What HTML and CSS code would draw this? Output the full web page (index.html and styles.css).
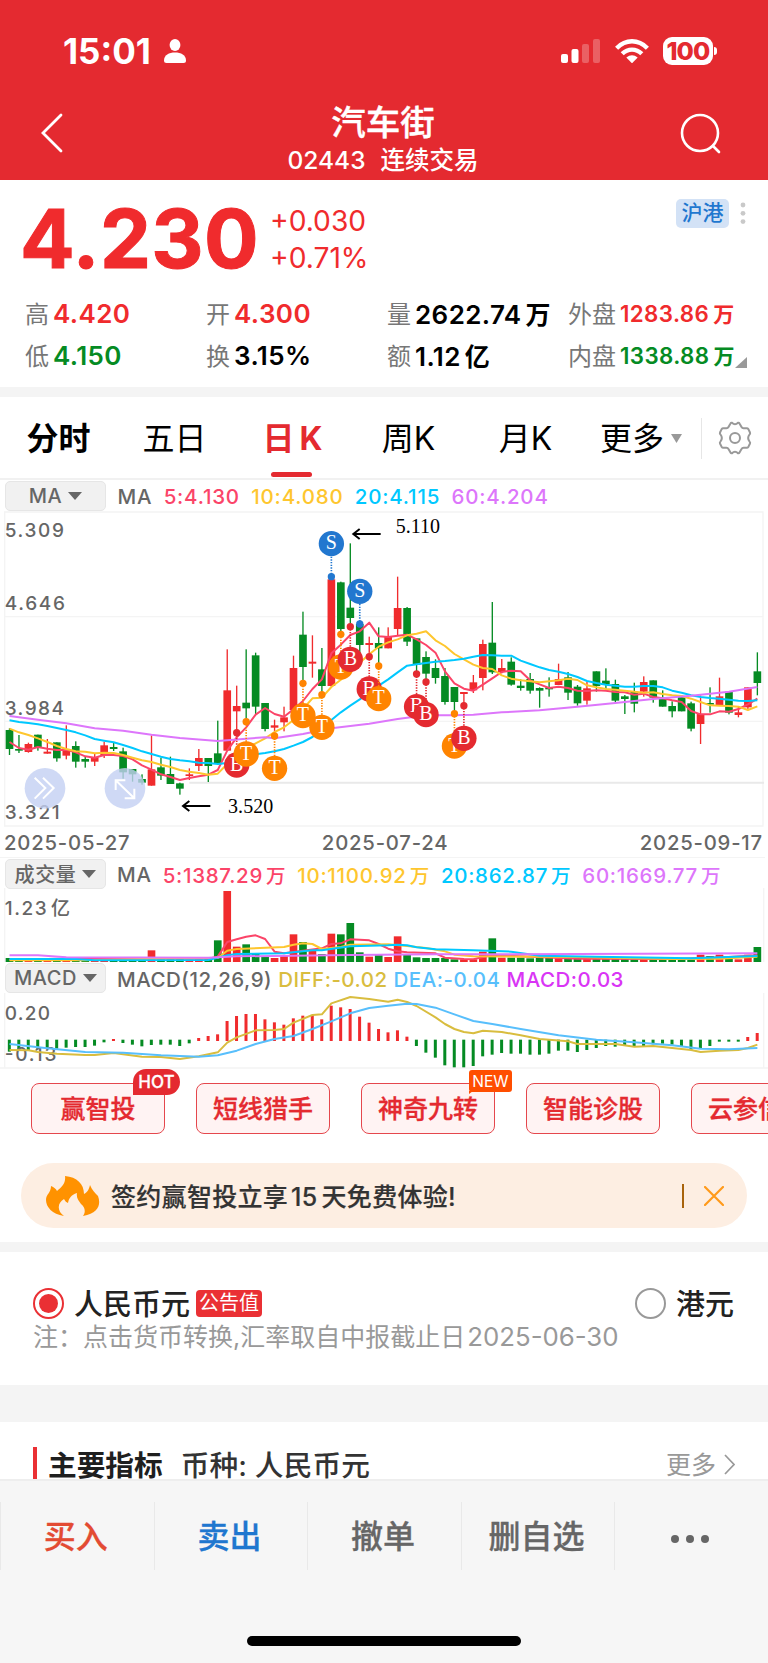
FILE: index.html
```html
<!DOCTYPE html>
<html lang="zh-CN">
<head>
    <meta charset="UTF-8">
    <meta name="viewport" content="width=device-width, initial-scale=1.0">
    <title>汽车街 02443</title>
    <link rel="stylesheet" href="styles.css">
</head>
<body>
    <header class="header">
        <div class="status">
            <span class="time">15:01</span>
            <svg class="person" width="22" height="24" viewBox="0 0 22 24"><ellipse cx="11" cy="6" rx="5.4" ry="6"/><path d="M0 21.5C0 16 5 13.500 11 13.500S22 16 22 21.500Q22 24 19.500 24H2.500Q0 24 0 21.500Z"/></svg>
            <svg class="signal" width="39" height="24" viewBox="0 0 39 24"><rect y="15" width="7" height="9" rx="2"/><rect x="10.500" y="10" width="7" height="14" rx="2"/><g opacity=".25"><rect x="21" y="5" width="7" height="19" rx="2"/><rect x="32" width="7" height="24" rx="2"/></g></svg>
            <svg class="wifi" width="34" height="24" viewBox="0 0 34 24"><g fill="none" stroke="#fff" stroke-width="4.400"><path d="M1.600 9.200Q8.500 2.300 17 2.300T32.400 9.200"/><path d="M7.200 14.800Q11.500 10.600 17 10.600T26.800 14.800"/></g><path d="M11.300 18.600Q17 13.800 22.700 18.600L17 24.300Z"/></svg>
            <span class="battery">100</span>
        </div>
        <div class="nav">
            <svg width="22" height="40" viewBox="0 0 22 40"><path d="M20 2L2 20L20 38" fill="none" stroke="#fff" stroke-width="2.800" stroke-linecap="round"/></svg>
            <div class="title">
                <h1>汽车街</h1>
                <p><span>02443</span><span>连续交易</span></p>
            </div>
            <svg width="42" height="42" viewBox="0 0 42 42"><g fill="none" stroke="#fff" stroke-width="2.600" stroke-linecap="round"><circle cx="20" cy="20" r="18"/><path d="M33 33L39 39"/></g></svg>
        </div>
    </header>

    <section class="quote">
        <div class="price-row">
            <span class="price">4.230</span>
            <div class="change"><span>+0.030</span><span>+0.71%</span></div>
            <span class="market">沪港</span>
            <svg class="dots" width="6" height="30" viewBox="0 0 6 30"><circle cx="3" cy="5" r="2.400"/><circle cx="3" cy="13.300" r="2.400"/><circle cx="3" cy="21.600" r="2.400"/></svg>
        </div>
        <div class="stats">
            <div><label>高</label><b class="up">4.420</b></div>
            <div><label>开</label><b class="up">4.300</b></div>
            <div><label>量</label><b>2622.74<i>万</i></b></div>
            <div class="small"><label>外盘</label><b class="up">1283.86<i>万</i></b></div>
            <div><label>低</label><b class="down">4.150</b></div>
            <div><label>换</label><b>3.15%</b></div>
            <div><label>额</label><b>1.12<i>亿</i></b></div>
            <div class="small"><label>内盘</label><b class="down">1338.88<i>万</i></b><svg class="corner" width="12" height="11" viewBox="0 0 12 11"><path d="M12 0V11H0Z" fill="#999"/></svg></div>
        </div>
    </section>

    <nav class="tabs">
        <a class="bold">分时</a>
        <a>五日</a>
        <a class="active">日<span>K</span></a>
        <a>周K</a>
        <a>月K</a>
        <a class="more">更多<svg width="11" height="9" viewBox="0 0 11 9"><path d="M0 0H11L5.500 9Z" fill="#999"/></svg></a>
        <svg class="gear" width="34" height="34" viewBox="0 0 34 34"><g fill="none" stroke="#999" stroke-width="2" stroke-linejoin="round"><path d="M12.500 2.500Q13 1.500 14 1.800Q17 4.800 20 1.800Q21 1.500 21.500 2.500L23.500 6Q24.200 7.300 25.500 7.300H29Q30 7.500 30.600 8.600L32 11.500Q32.500 12.800 31.500 13.500Q28.800 17 31.500 20.500Q32.500 21.300 32 22.500L30.600 25.400Q30 26.500 29 26.700H25.500Q24.200 26.700 23.500 28L21.500 31.500Q21 32.500 20 32.200Q17 29.200 14 32.200Q13 32.500 12.500 31.500L10.500 28Q9.800 26.700 8.500 26.700H5Q4 26.500 3.400 25.400L2 22.500Q1.500 21.300 2.500 20.500Q5.200 17 2.500 13.500Q1.500 12.800 2 11.500L3.400 8.600Q4 7.500 5 7.300H8.500Q9.800 7.300 10.500 6Z"/><circle cx="17" cy="17" r="5"/></g></svg>
    </nav>

    <section class="charts">
        <div class="legend legend-ma">
            <span class="chip">MA<i></i></span>
            <span>MA</span>
            <span class="ma5">5:4.130</span>
            <span class="ma10">10:4.080</span>
            <span class="ma20">20:4.115</span>
            <span class="ma60">60:4.204</span>
        </div>
        <svg id="kline" width="768" height="318" viewBox="0 0 2304 954"></svg>
        <div class="dates"><span>2025-05-27</span><span>2025-07-24</span><span>2025-09-17</span></div>
        <div class="legend legend-vol">
            <span class="chip">成交量<i></i></span>
            <span>MA</span>
            <span class="ma5">5:1387.29<em>万</em></span>
            <span class="ma10">10:1100.92<em>万</em></span>
            <span class="ma20">20:862.87<em>万</em></span>
            <span class="ma60">60:1669.77<em>万</em></span>
        </div>
        <svg id="volume" width="768" height="74" viewBox="0 204 2304 222"></svg>
        <div class="legend legend-macd">
            <span class="chip">MACD<i></i></span>
            <span>MACD(12,26,9)</span>
            <span class="diff">DIFF:-0.02</span>
            <span class="dea">DEA:-0.04</span>
            <span class="macd">MACD:0.03</span>
        </div>
        <svg id="macd" width="768" height="76" viewBox="0 519 2304 228"></svg>
    </section>

    <div class="tools">
        <a>赢智投<span class="tag hot">HOT</span></a>
        <a>短线猎手</a>
        <a>神奇九转<span class="tag new">NEW</span></a>
        <a>智能诊股</a>
        <a>云参信息</a>
    </div>

    <div class="banner">
        <svg width="54" height="40" viewBox="0 0 54 40"><path fill="#ff9200" d="M18 40C6 38 0 31 0 24C0 18 5 17 5 10C8 11 10 13 11 15C16 11 20 7 19 0C31 1 38 8 38 18C42 16 43 13 44 9C46 14 49 17 52 20C55 28 53 37 37 40C40 36 39 31 35 28C33 25 30 22 31 17C25 19 23 22 22 27C20 26 19 25 18 23C11 27 11 35 18 40Z"/></svg>
        <span class="banner-text">签约赢智投立享<b>15</b>天免费体验!</span>
        <span class="bar"></span>
        <svg width="20" height="20" viewBox="0 0 20 20"><path d="M1 1L19 19M19 1L1 19" stroke="#ff9a1a" stroke-width="2.200" stroke-linecap="round"/></svg>
    </div>

    <section class="currency">
        <div class="options">
            <span class="radio checked"></span>
            <span class="name">人民币元</span>
            <span class="notice">公告值</span>
            <span class="radio hk"></span>
            <span class="name">港元</span>
        </div>
        <p>注：点击货币转换,汇率取自中报截止日<span>2025-06-30</span></p>
    </section>

    <section class="metrics">
        <h2>主要指标</h2>
        <h3>币种: 人民币元</h3>
        <a>更多<svg width="11" height="21" viewBox="0 0 11 21"><path d="M1 1L10 10.500L1 20" fill="none" stroke="#999" stroke-width="1.700"/></svg></a>
    </section>

    <footer class="trade">
        <div class="actions">
            <a class="buy">买入</a>
            <a class="sell">卖出</a>
            <a>撤单</a>
            <a>删自选</a>
            <a><svg width="40" height="10" viewBox="0 0 40 10"><circle cx="5" cy="5" r="4"/><circle cx="20" cy="5" r="4"/><circle cx="35" cy="5" r="4"/></svg></a>
        </div>
        <div class="home"></div>
    </footer>
    <script src="script.js"></script>
</body>
</html>
```
FILE: styles.css
```css
* {
    box-sizing: border-box;
}

body {
    margin: 0;
    width: 768px;
    height: 1663px;
    overflow: hidden;
    background-color: #fff;
    color: #000;
    font-family: Inter, "Noto Sans CJK SC", sans-serif;
}

h1, h2, h3, p {
    margin: 0;
    font-weight: 500;
}

i, em {
    font-style: normal;
}

svg {
    display: block;
    flex: none;
}

/* header */
.header {
    height: 180px;
    background-color: #e42a30;
    color: #fff;
}

.status {
    display: flex;
    align-items: center;
    height: 102px;
    padding: 0 52px 0 63px;
    fill: #fff;
}

.time {
    width: 101px;
    font-size: 35px;
    font-weight: 700;
}

.signal {
    margin-left: auto;
}

.wifi {
    margin: 0 14px 0 15px;
}

.battery {
    position: relative;
    width: 50px;
    height: 28px;
    margin-right: 3px;
    border-radius: 9px;
    background-color: #fff;
    color: #e42a30;
    font-size: 25px;
    font-weight: 800;
    letter-spacing: -0.8px;
    line-height: 28px;
    text-align: center;
}

.battery::after {
    content: "";
    position: absolute;
    right: -4px;
    top: 10px;
    width: 3px;
    height: 8px;
    border-radius: 0 3px 3px 0;
    background-color: #fff;
}

.nav {
    display: flex;
    justify-content: space-between;
    align-items: flex-start;
    padding: 11px 46px 0 41px;
}

.title {
    margin-top: -10px;
    margin-left: 23px;
    text-align: center;
}

.title h1 {
    font-size: 34.5px;
    line-height: 39px;
    -webkit-text-stroke: 0.4px;
}

.title p {
    display: flex;
    gap: 15px;
    font-size: 24.5px;
    line-height: 36px;
}

/* price */
.quote {
    height: 217px;
    border-bottom: 10px solid #f4f4f4;
}

.price-row {
    display: flex;
    height: 112px;
    padding: 0 22px 0 20px;
    color: #f02b2d;
}

.price {
    width: 250px;
    font-size: 81px;
    font-weight: 700;
    letter-spacing: 0.4px;
    line-height: 118px;
    -webkit-text-stroke: 1px;
}

.change {
    display: flex;
    flex-direction: column;
    padding-top: 23px;
    font-size: 28.2px;
    line-height: 37px;
}

.market {
    height: 29px;
    width: 53px;
    margin: 19px 11px 0 auto;
    border-radius: 5px;
    background-color: #d3e2f6;
    color: #1f77cf;
    font-size: 21px;
    font-weight: 500;
    line-height: 28px;
    text-align: center;
}

.dots {
    margin-top: 20px;
    fill: #c9c9c9;
}

.stats {
    display: grid;
    grid-template-columns: repeat(4, 181px);
    grid-auto-rows: 42px;
    padding-left: 25px;
    font-size: 26px;
}

.stats div {
    display: flex;
    align-items: center;
    white-space: nowrap;
}

.stats label {
    margin: -2px 4px 0 0;
    color: #777;
    font-size: 24px;
}

.stats b {
    font-weight: 600;
    letter-spacing: 0.4px;
}

.stats i {
    margin-left: 4px;
    font-size: 25px;
}

.stats .small b {
    font-size: 22.3px;
}

.stats .small i {
    font-size: 21px;
}

.up {
    color: #f02b2d;
}

.down {
    color: #058b23;
}

.stats .corner {
    margin-top: 14px;
}

/* tabs */
.tabs {
    display: flex;
    align-items: center;
    height: 83px;
    border-bottom: 2px solid #f1f1f1;
    font-size: 32px;
}

.tabs a {
    position: relative;
    display: flex;
    justify-content: center;
    align-items: center;
    width: 117px;
    padding: 2px 2px 0 0;
    line-height: 79px;
}

.tabs .bold {
    padding-right: 0;
    font-weight: 600;
}

.tabs .active {
    padding-right: 0;
    color: #e42a30;
    font-weight: 600;
}

.tabs .active span {
    margin-left: 5px;
    font-weight: 700;
}

.tabs .active::after {
    content: "";
    position: absolute;
    left: 37px;
    bottom: 1px;
    width: 41px;
    height: 5px;
    border-radius: 3px;
    background-color: #e42a30;
}

.tabs .more {
    padding-right: 5px;
}

.tabs .more svg {
    margin-left: 7px;
}

.tabs .more::after {
    content: "";
    position: absolute;
    right: 0;
    top: 21px;
    height: 41px;
    border-right: 1px solid #e6e6e6;
}

.gear {
    margin-left: 16px;
}

/* charts */
.legend {
    display: flex;
    align-items: center;
    padding-left: 5px;
    color: #666;
    font-size: 20.5px;
    font-weight: 500;
    letter-spacing: 0.8px;
    white-space: nowrap;
}

.legend > span + span {
    padding-top: 3px;
}

.legend-ma {
    height: 30px;
    gap: 11.4px;
}

.legend-vol {
    height: 31px;
    gap: 11px;
    margin-right: 3px;
    border-top: 1px solid #f4f4f4;
    letter-spacing: 0.7px;
}

.legend-macd {
    height: 31px;
    gap: 6px;
    letter-spacing: 0.5px;
}

.legend em {
    margin-left: 3px;
    font-size: 19.5px;
}

.legend .chip {
    display: flex;
    align-items: center;
    justify-content: center;
    width: 101px;
    height: 30px;
    margin-top: 1px;
    border: 1px solid #e6e6e6;
    border-radius: 5px;
    background-color: #f1f1f1;
    font-size: 20px;
    letter-spacing: 0.6px;
}

.legend-macd .chip {
    margin-right: 5px;
}

.chip i {
    margin-left: 6px;
    border: 7px solid transparent;
    border-top: 8px solid #666;
    border-bottom: 0;
}

.ma5 { color: #fb4468; }
.ma10 { color: #fec62e; }
.ma20 { color: #00c8ff; }
.ma60 { color: #dd76fb; }
.diff { color: #d9bd3f; }
.dea { color: #58bffc; }
.macd { color: #d935f5; }

.dates {
    display: flex;
    justify-content: space-between;
    height: 29px;
    padding: 0 5px 0 4px;
    color: #666;
    font-size: 20.3px;
    font-weight: 500;
    letter-spacing: 0.8px;
    line-height: 30px;
}

.axis {
    fill: #666;
    font-size: 57px;
    font-weight: 500;
}

.serif {
    font-family: "Liberation Serif", serif;
}

/* tool buttons */
.tools {
    display: flex;
    gap: 31px;
    height: 95px;
    padding: 14px 0 0 31px;
    overflow: hidden;
}

.tools a {
    position: relative;
    flex: none;
    width: 134px;
    height: 51px;
    border: 1px solid #e5474d;
    border-radius: 8px;
    background-color: #fff3f3;
    color: #e42a30;
    font-size: 25px;
    font-weight: 500;
    line-height: 50px;
    text-align: center;
    -webkit-text-stroke: 0.3px;
}

.tag {
    position: absolute;
    color: #fff;
    font-size: 17px;
}

.hot {
    left: 101px;
    top: -15px;
    width: 47px;
    height: 26px;
    border-radius: 13px 13px 13px 0;
    background-color: #e42a30;
    line-height: 27px;
}

.new {
    left: 107px;
    top: -14px;
    width: 43px;
    height: 22px;
    border-radius: 3px;
    background-color: #ff4e00;
    font-size: 15.5px;
    font-weight: 400;
    line-height: 23px;
    -webkit-text-stroke: 0;
}

.new::after {
    content: "";
    position: absolute;
    left: 0;
    bottom: -2px;
    border-top: 3px solid #ff4e00;
    border-right: 4px solid transparent;
}

.banner {
    display: flex;
    align-items: center;
    height: 65px;
    margin: -1px 21px 14px;
    padding: 0 23px 0 25px;
    border-radius: 33px;
    background-color: #fdeee2;
    color: #333;
}

.banner-text {
    margin: -2px 0 0 11px;
    font-size: 25px;
    font-weight: 500;
    letter-spacing: 0.3px;
    -webkit-text-stroke: 0.2px;
}

.banner-text b {
    margin: 0 4px 0 3px;
    font-weight: 500;
    font-size: 25px;
}

.bar {
    width: 2px;
    height: 24px;
    margin: 0 20px 0 auto;
    background-color: #a8630c;
}

/* currency */
.currency {
    height: 180px;
    padding: 32px 34px 0 33px;
    border-top: 10px solid #f4f4f4;
    border-bottom: 37px solid #f4f4f4;
}

.options {
    display: flex;
    align-items: center;
    height: 39px;
    color: #222;
    font-size: 29px;
    font-weight: 500;
}

.name {
    margin-top: -3px;
}

.radio {
    width: 31px;
    height: 31px;
    margin-right: 10px;
    border: 2px solid #999;
    border-radius: 50%;
}

.checked {
    padding: 4px;
    border-color: #ea3034;
    background-color: #ea3034;
    background-clip: content-box;
}

.hk {
    margin-left: auto;
}

.notice {
    width: 66px;
    height: 27px;
    margin-left: 6px;
    border-radius: 4px;
    background-color: #ea3034;
    color: #fff;
    font-size: 20px;
    font-weight: 400;
    line-height: 26px;
    text-align: center;
}

.currency p {
    color: #999;
    font-size: 25px;
    font-weight: 400;
    line-height: 28px;
    white-space: nowrap;
}

.currency p span {
    margin-left: 2px;
    font-size: 25.8px;
}

.metrics {
    display: flex;
    align-items: center;
    height: 57px;
    padding: 25px 33px 0;
}

.metrics h2,
.metrics h3 {
    color: #1f1f1f;
    font-size: 28.7px;
    line-height: 37px;
}

.metrics h2 {
    height: 32px;
    padding-left: 11px;
    border-left: 4px solid #ea3034;
    font-weight: 700;
}

.metrics h3 {
    margin: 5px 0 0 18px;
    color: #333;
    letter-spacing: 0.1px;
}

.metrics a {
    display: flex;
    align-items: center;
    gap: 8px;
    margin-top: 3px;
    margin-left: auto;
    color: #999;
    font-size: 25px;
    line-height: 32px;
}

/* bottom bar */
.trade {
    position: relative;
    height: 184px;
    padding-top: 21px;
    border-top: 2px solid #eee;
    background-color: #f6f6f6;
}

.actions {
    display: flex;
}

.actions a {
    display: flex;
    align-items: center;
    justify-content: center;
    width: 20%;
    height: 68px;
    padding: 0 3px 5px 0;
    border-left: 1px solid #e9e9e9;
    color: #666;
    fill: #666;
    font-size: 32px;
    font-weight: 500;
    -webkit-text-stroke: 0.3px;
}

.actions a:last-child {
    padding: 5px 3px 0 0;
}

.actions .buy {
    color: #e34b33;
}

.actions .sell {
    color: #1f77cf;
}

.home {
    width: 274px;
    height: 10px;
    margin: 66px auto 0;
    border-radius: 5px;
    background-color: #000;
}
```
FILE: script.js
```js
// All chart coordinates are in @3x units, the svg viewBox scales them down
const STEP = 28.4;
const RED = '#f02b2d';
const GREEN = '#058b23';
const cx = i => 28.5 + STEP * i;

// [color, body top, body bottom, high, low]
const candles = [
    ['G', 660, 717, 655, 735], ['G', 717, 722, 675, 729], ['R', 702, 726, 698, 728], ['G', 674, 712, 674, 722],
    ['R', 725, 731, 687, 731], ['G', 697, 745, 697, 755], ['R', 718, 737, 646, 748], ['G', 708, 755, 694, 773],
    ['G', 747, 755, 740, 773], ['R', 742, 755, 731, 768], ['R', 706, 737, 695, 744], ['G', 711, 717, 698, 723],
    ['G', 724, 787, 713, 806], ['G', 777, 793, 777, 815], ['G', 807, 818, 793, 824], ['R', 778, 827, 676, 827],
    ['G', 772, 797, 743, 810], ['G', 792, 822, 740, 822], ['G', 820, 836, 818, 854], ['R', 793, 798, 775, 810],
    ['R', 744, 768, 717, 783], ['G', 744, 768, 744, 816], ['G', 730, 762, 632, 765], ['R', 541, 722, 418, 722],
    ['R', 588, 604, 527, 665], ['G', 578, 595, 418, 632], ['G', 436, 590, 428, 612], ['G', 579, 657, 579, 664],
    ['R', 646, 653, 629, 676], ['R', 622, 637, 590, 664], ['R', 474, 600, 437, 600], ['G', 374, 471, 305, 520],
    ['R', 455, 461, 376, 503], ['G', 478, 528, 414, 552], ['R', 208, 528, 200, 530], ['G', 217, 357, 215, 370],
    ['G', 293, 324, 100, 348], ['G', 342, 405, 342, 470], ['R', 399, 405, 380, 438], ['G', 399, 415, 352, 466],
    ['R', 381, 415, 352, 415], ['R', 294, 357, 200, 375], ['G', 294, 395, 291, 408], ['G', 385, 465, 385, 490],
    ['G', 441, 491, 424, 515], ['G', 474, 504, 448, 521], ['G', 498, 576, 474, 584], ['G', 531, 576, 531, 608],
    ['R', 546, 552, 546, 585], ['R', 517, 541, 495, 549], ['R', 402, 504, 389, 541], ['G', 398, 487, 276, 492],
    ['R', 474, 486, 447, 490], ['G', 455, 524, 442, 527], ['G', 527, 534, 508, 542], ['G', 507, 542, 489, 551],
    ['G', 534, 542, 532, 593], ['G', 532, 538, 502, 560], ['R', 507, 525, 461, 525], ['G', 502, 548, 486, 570],
    ['G', 530, 580, 525, 587], ['R', 535, 572, 516, 584], ['G', 484, 528, 484, 545], ['G', 512, 522, 475, 540],
    ['G', 522, 572, 509, 577], ['G', 559, 567, 555, 612], ['G', 545, 581, 518, 607], ['R', 516, 545, 499, 560],
    ['G', 511, 563, 511, 578], ['G', 566, 590, 541, 590], ['G', 588, 604, 574, 622], ['G', 560, 604, 555, 604],
    ['G', 580, 656, 575, 664], ['R', 612, 642, 556, 702], ['G', 579, 584, 532, 608], ['R', 559, 585, 503, 585],
    ['G', 545, 608, 545, 613], ['R', 607, 615, 591, 622], ['R', 532, 592, 532, 601], ['G', 484, 519, 427, 556]
];

const ma5 = [696, 714, 719, 711, 716, 720, 719, 727, 739, 743, 735, 735, 738, 748, 766, 779, 793, 801, 810, 804,
    799, 794, 780, 722, 682, 652, 614, 594, 612, 620, 598, 573, 537, 508, 430, 404, 375, 364, 338, 379,
    381, 377, 374, 388, 405, 428, 484, 520, 536, 542, 524, 505, 486, 482, 484, 511, 523, 534, 530, 534,
    542, 543, 541, 542, 546, 547, 554, 551, 561, 565, 571, 576, 603, 613, 613, 604, 605, 597, 583, 566];
const ma10 = [656, 667, 675, 685, 696, 708, 717, 724, 725, 730, 728, 729, 735, 743, 751, 756, 764, 771, 780, 785,
    789, 794, 791, 762, 738, 719, 700, 685, 666, 652, 630, 597, 565, 563, 531, 509, 485, 458, 433, 410,
    397, 388, 376, 371, 364, 391, 408, 432, 448, 464, 474, 477, 496, 506, 511, 514, 517, 514, 511, 506,
    510, 526, 532, 537, 539, 542, 545, 548, 547, 552, 556, 558, 566, 576, 586, 587, 588, 590, 600, 589];
const ma20 = [631, 636, 639, 643, 648, 654, 660, 667, 676, 687, 692, 697, 705, 714, 724, 732, 740, 747, 751, 754,
    758, 759, 762, 759, 750, 740, 733, 729, 724, 717, 707, 696, 681, 661, 630, 607, 587, 568, 547, 527,
    508, 487, 467, 463, 459, 455, 453, 450, 446, 440, 435, 436, 437, 437, 452, 462, 472, 480, 485, 492,
    501, 513, 519, 524, 527, 530, 530, 528, 528, 532, 542, 548, 556, 561, 564, 566, 569, 572, 573, 571];

// [index, y] pairs, the slow lines need fewer points
const ma60 = [[0, 618], [3, 629], [6, 640], [9, 655], [12, 662], [15, 674], [18, 684], [22, 693], [25, 686], [27, 682],
    [28, 685], [31, 672], [34, 655], [38, 641], [41, 627], [44, 616], [47, 616], [49, 614], [52, 607], [56, 601],
    [60, 590], [64, 579], [68, 567], [72, 557], [76, 545], [79, 531]];

const volumes = [414, 417, 418, 419, 417, 418, 417, 417, 415, 416, 416, 416, 415, 415, 415, 391, 417, 416, 416, 419,
    418, 417, 361, 213, 380, 373, 402, 411, 414, 408, 343, 366, 392, 402, 341, 343, 309, 397, 410, 404,
    411, 349, 404, 412, 414, 414, 414, 418, 418, 418, 395, 355, 413, 413, 413, 415, 412, 414, 415, 414,
    414, 417, 417, 416, 417, 417, 418, 418, 418, 418, 418, 418, 418, 404, 408, 404, 415, 418, 404, 381];
const vol5 = [[0, 419], [8, 415], [21, 416], [22, 410], [23, 366], [24, 358], [25, 350], [26, 346], [27, 357], [28, 395],
    [29, 400], [31, 392], [33, 385], [34, 372], [35, 370], [36, 358], [38, 361], [39, 372], [40, 386], [41, 394],
    [42, 397], [45, 400], [46, 413], [48, 417], [49, 418], [51, 405], [55, 410], [60, 416], [70, 417], [76, 411], [79, 406]];
const vol10 = [[0, 421], [8, 421], [15, 416], [22, 414], [23, 392], [24, 387], [29, 381], [30, 374], [31, 370], [32, 372],
    [33, 387], [35, 381], [36, 374], [40, 373], [42, 378], [44, 384], [46, 394], [47, 404], [49, 409], [60, 411],
    [70, 417], [75, 416], [79, 410]];
const vol20 = [[0, 417], [7, 417], [9, 421], [21, 420], [23, 406], [24, 402], [29, 400], [32, 391], [33, 391], [36, 379],
    [40, 376], [41, 374], [42, 376], [43, 382], [45, 388], [49, 391], [53, 395], [56, 407], [62, 410], [72, 415], [79, 408]];
const vol60 = [[0, 406], [3, 406], [6, 412], [21, 413], [24, 409], [36, 405], [45, 403], [60, 402], [79, 400]];

const bars = [695, 693, 690, 686, 684, 686, 683, 681, 681, 677, 667, -657, 669, 674, 679, 675, 674, 674, 678, 670,
    -654, -648, -643, -603, -588, -582, -582, -598, -607, -614, -595, -587, -585, -598, -557, -562, -567, -590, -608, -627,
    -637, -631, -650, 678, 698, 713, 736, 742, 742, 738, 709, 704, 699, 701, 701, 704, 704, 701, 692, 692,
    696, 690, 684, 678, 680, 678, 680, 680, 673, 671, 674, 678, 689, 684, 678, 665, 665, 665, -651, -639];
const diff = [[0, 690], [2, 691], [3, 696], [5, 701], [8, 705], [9, 705], [11, 699], [14, 710], [16, 711], [18, 717],
    [20, 709], [22, 697], [23, 668], [24, 652], [26, 631], [28, 630], [29, 627], [30, 608], [32, 585], [33, 583],
    [34, 550], [36, 531], [38, 537], [40, 545], [41, 539], [42, 546], [43, 558], [45, 592], [46, 612], [47, 627],
    [48, 636], [49, 640], [50, 632], [52, 636], [54, 646], [56, 657], [59, 664], [60, 672], [64, 672], [66, 680],
    [68, 678], [72, 690], [73, 696], [75, 692], [77, 690], [78, 684], [79, 674]];
const dea = [[0, 672], [4, 685], [8, 696], [12, 698], [16, 706], [20, 710], [22, 706], [24, 692], [26, 672], [28, 657],
    [30, 648], [32, 627], [34, 604], [36, 580], [38, 564], [40, 557], [42, 551], [43, 552], [45, 563], [47, 583],
    [49, 603], [51, 612], [54, 627], [58, 646], [62, 659], [66, 667], [70, 676], [73, 686], [76, 688], [79, 684]];

// [index, label, dot y, circle y]
const marks = [
    [24, 'B', 668, 765], [25, 'T', 635, 732], [28, 'T', 678, 775], [31, 'T', 520, 617], [33, 'T', 554, 652],
    [34, 'S', 200, 101], [35, 'T', 373, 471], [36, 'B', 350, 448], [37, 'S', 342, 244], [38, 'B', 440, 537],
    [39, 'T', 468, 566], [43, 'B', 492, 590], [44, 'B', 516, 614], [47, 'T', 611, 708], [48, 'B', 587, 685]
];
const markColors = { B: '#e42a30', T: '#ff8400', S: '#2277cf' };

function rect(x, y, w, h, fill) {
    return `<rect x="${x}" y="${y}" width="${w}" height="${h}" fill="${fill}"/>`;
}

function line(points, color) {
    const list = points.map((p, i) => Array.isArray(p) ? `${cx(p[0])},${p[1]}` : `${cx(i)},${p}`).join(' ');
    return `<polyline points="${list}" fill="none" stroke="${color}" stroke-width="6" stroke-linejoin="round"/>`;
}

function label(text, x, y, width, cls, size = 57) {
    return `<text class="${cls}" x="${x}" y="${y}" font-size="${size}" textLength="${width}">${text}</text>`;
}

function arrow(x, y) {
    return `<path d="M${x + 84} ${y}H${x + 2}M${x + 21} ${y - 15}L${x + 2} ${y}L${x + 21} ${y + 15}" fill="none" stroke="#000" stroke-width="6"/>`;
}

function drawKline() {
    let out = '<path d="M14 6H2289M14 320H2289M14 634H2289M14 948H2289M14 4V950M2289 4V950" stroke="#f4f4f4" stroke-width="4"/>';
    out += '<path d="M568 818H2292" stroke="#e9e9e9" stroke-width="6"/>';
    out += label('5.309', 14, 82, 178, 'axis') + label('4.646', 14, 299, 181, 'axis');
    out += label('3.984', 14, 614, 178, 'axis') + label('3.321', 14, 928, 165, 'axis');
    candles.forEach(([c, top, bottom, high, low], i) => {
        const color = c === 'R' ? RED : GREEN;
        out += rect(cx(i) - 2, high, 4, low - high, color);
        out += rect(cx(i) - 11.5, top, 23, bottom - top, color);
    });
    out += line(ma5, '#fb4468') + line(ma10, '#fec62e') + line(ma20, '#00c8ff') + line(ma60, '#dd76fb');
    marks.forEach(([i, text, dot, y]) => {
        const x = cx(i);
        const color = markColors[text];
        out += `<path d="M${x} ${dot}V${y}" stroke="${color}" stroke-width="5" stroke-dasharray="4 4"/>`;
        out += `<circle cx="${x}" cy="${dot}" r="11" fill="${color}"/><circle cx="${x}" cy="${y}" r="38" fill="${color}"/>`;
        out += `<text class="serif" x="${x}" y="${y + 17}" font-size="60" fill="#fff" text-anchor="middle">${text}</text>`;
    });
    out += arrow(1058, 72) + label('5.110', 1187, 68, 133, 'serif', 60);
    out += arrow(547, 888) + label('3.520', 684, 908, 136, 'serif', 60);
    // floating buttons
    out += '<g fill="#c3cff3" fill-opacity=".8"><circle cx="135" cy="835" r="61"/><circle cx="375" cy="835" r="61"/></g>';
    out += '<g fill="none" stroke="#fff" stroke-width="6"><path d="M104 803L136 834L104 866M129 803L161 834L129 866"/><path d="M347 840V811H376M347 811L403 865M374 865H403V836"/></g>';
    document.getElementById('kline').innerHTML = out;
}

function drawVolume() {
    let out = '<path d="M14 204V426M2291 204V426" stroke="#f4f4f4" stroke-width="4"/>';
    out += label('1.23', 14, 286, 126, 'axis') + label('亿', 153, 286, 57, 'axis');
    volumes.forEach((y, i) => {
        out += rect(cx(i) - 11.5, y, 23, 426 - y, candles[i][0] === 'R' ? RED : GREEN);
    });
    out += line(vol5, '#fb4468') + line(vol10, '#fec62e') + line(vol20, '#00c8ff') + line(vol60, '#dd76fb');
    document.getElementById('volume').innerHTML = out;
}

function drawMacd() {
    let out = '<path d="M14 519V743M2291 519V743M0 744H2304" stroke="#f4f4f4" stroke-width="4"/>';
    bars.forEach((v, i) => {
        // negative entries are red bars above the zero line
        const x = cx(i) - 5;
        out += v < 0 ? rect(x, -v, 9, 663 + v, RED) : rect(x, 659, 9, v - 659, GREEN);
    });
    out += label('0.20', 14, 601, 136, 'axis') + label('-0.13', 14, 722, 155, 'axis');
    out += line(diff, '#d9bd3f') + line(dea, '#58bffc');
    document.getElementById('macd').innerHTML = out;
}

drawKline();
drawVolume();
drawMacd();
```
